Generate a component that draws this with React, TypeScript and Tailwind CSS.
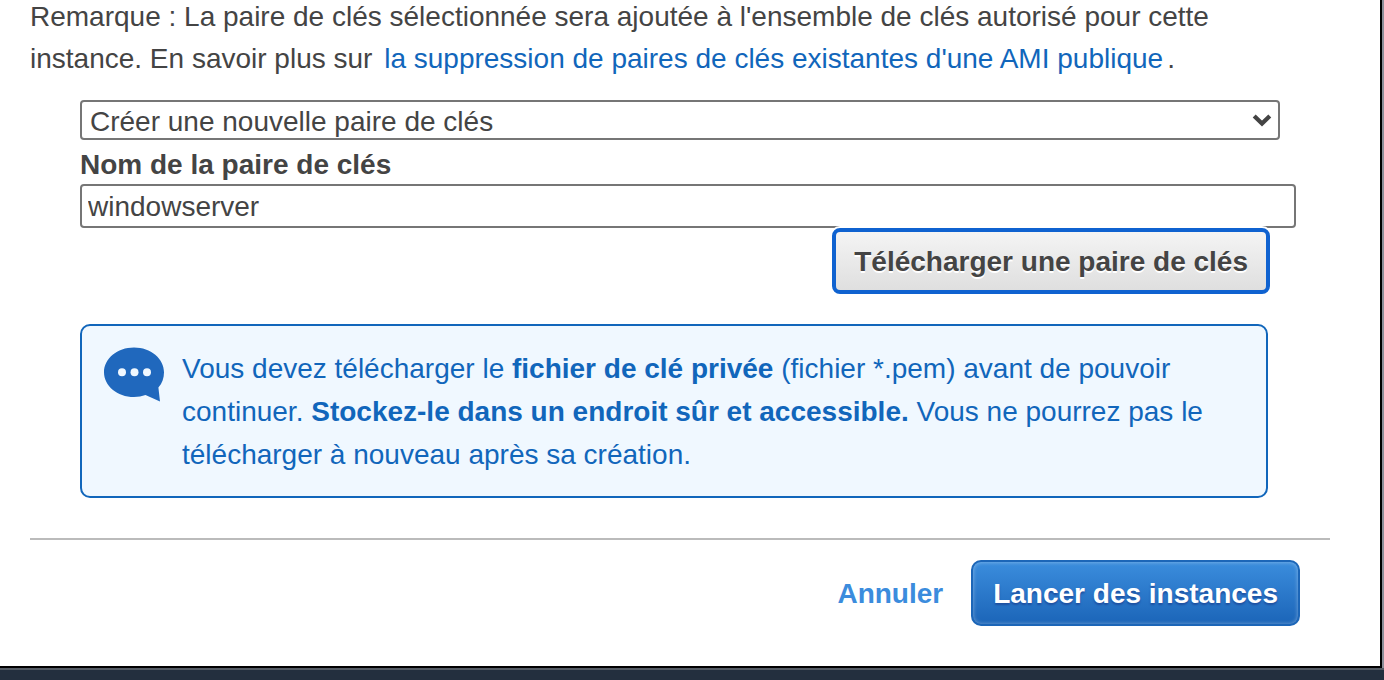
import { useState } from "react";

function ChatIcon() {
  return (
    <svg viewBox="1 0 62 56" className="h-14 w-[62px] shrink-0" aria-hidden="true">
      <path
        d="M31 .6C14.200 .6 1 11.800 1 25.300S14.200 50.100 31 50.100c4.300 0 8-.7 11.500-2L57 54.600l-1.600-14C59.200 36.400 61 31.300 61 25.300 61 11.800 47.800 .6 31 .6Z"
        fill="#2068bd"
      />
      <circle cx="19" cy="25.300" r="4" fill="#f0f8ff" />
      <circle cx="31.500" cy="25.300" r="4" fill="#f0f8ff" />
      <circle cx="44" cy="25.300" r="4" fill="#f0f8ff" />
    </svg>
  );
}

export default function App() {
  const [choice, setChoice] = useState("new");
  const [name, setName] = useState("windowserver");

  return (
    <div className="flex min-h-screen flex-col overflow-hidden bg-[#232f3e] font-['Liberation_Sans',Arial,sans-serif] text-[28px] leading-[42px] text-[#444]">
      <div className="border-b-2 border-[#545b64] bg-[#8c8f99] pr-0.5">
        <main className="border-r-2 border-b-2 border-black bg-white pr-[50px] pb-10 pl-[30px]">
          <p className="-mt-1">
            Remarque : La paire de clés sélectionnée sera ajoutée à l'ensemble de clés autorisé pour cette
            <br />
            instance. En savoir plus sur{" "}
            <a href="#ami" className="mx-1 text-[#1166bb]">
              la suppression de paires de clés existantes d'une AMI publique
            </a>
            .
          </p>

          <form className="mt-5 pr-[34px] pl-[50px]" onSubmit={(e) => e.preventDefault()}>
            <div className="relative mr-4">
              <select
                aria-label="Paire de clés"
                value={choice}
                onChange={(e) => setChoice(e.target.value)}
                className="block h-10 w-full appearance-none rounded-[4px] border-2 border-[#767676] bg-white pt-0.5 pl-2 leading-9"
              >
                <option value="new">Créer une nouvelle paire de clés</option>
              </select>
              <svg
                viewBox="0 0 20 14"
                className="pointer-events-none absolute top-3.5 right-2 h-3.5 w-5"
                aria-hidden="true"
              >
                <path d="M2.200 2 10 9.600 17.800 2" fill="none" stroke="#444" strokeWidth="4.200" />
              </svg>
            </div>
            <label htmlFor="key-name" className="block pt-1.5 leading-[38px] font-bold">
              Nom de la paire de clés
            </label>
            <input
              id="key-name"
              type="text"
              value={name}
              onChange={(e) => setName(e.target.value)}
              className="block h-11 w-full rounded-[4px] border-2 border-[#767676] bg-white px-1.5 pt-0.5"
            />
            <div className="mr-[26px] flex justify-end">
              <button
                type="button"
                className="h-[66px] rounded-lg border-4 border-[#0f62d0] bg-linear-to-b from-[#f4f4f4] to-[#dfdfdf] px-[18px] pt-0.5 font-bold shadow-[0_0_0_2px_#fff] [text-shadow:0_2px_0_#fff]"
              >
                Télécharger une paire de clés
              </button>
            </div>
            <div className="mt-[30px] mr-7 flex gap-4 rounded-[10px] border-2 border-[#1166bb] bg-[#f0f8ff] px-[22px] pt-[21px] pb-5 text-[#1166bb]">
              <ChatIcon />
              <p className="leading-[43px]">
                Vous devez télécharger le <strong>fichier de clé privée</strong> (fichier *.pem) avant de pouvoir
                <br />
                continuer. <strong>Stockez-le dans un endroit sûr et accessible.</strong> Vous ne pourrez pas le
                <br />
                télécharger à nouveau après sa création.
              </p>
            </div>
          </form>

          <footer className="mt-10 flex items-center justify-end gap-7 border-t-2 border-[#bbb] pt-5 pr-[30px]">
            <button type="button" className="pt-0.5 font-bold text-[#3b8cdd]">
              Annuler
            </button>
            <button
              type="button"
              className="h-[66px] rounded-[10px] border-2 border-[#1c66b8] bg-linear-to-b from-[#3b8ddd] to-[#1b65b8] px-5 pt-0.5 font-bold text-white shadow-[inset_0_0_4px_rgba(255,255,255,0.4)] [text-shadow:0_2px_2px_#1e4fa0]"
            >
              Lancer des instances
            </button>
          </footer>
        </main>
      </div>
    </div>
  );
}
